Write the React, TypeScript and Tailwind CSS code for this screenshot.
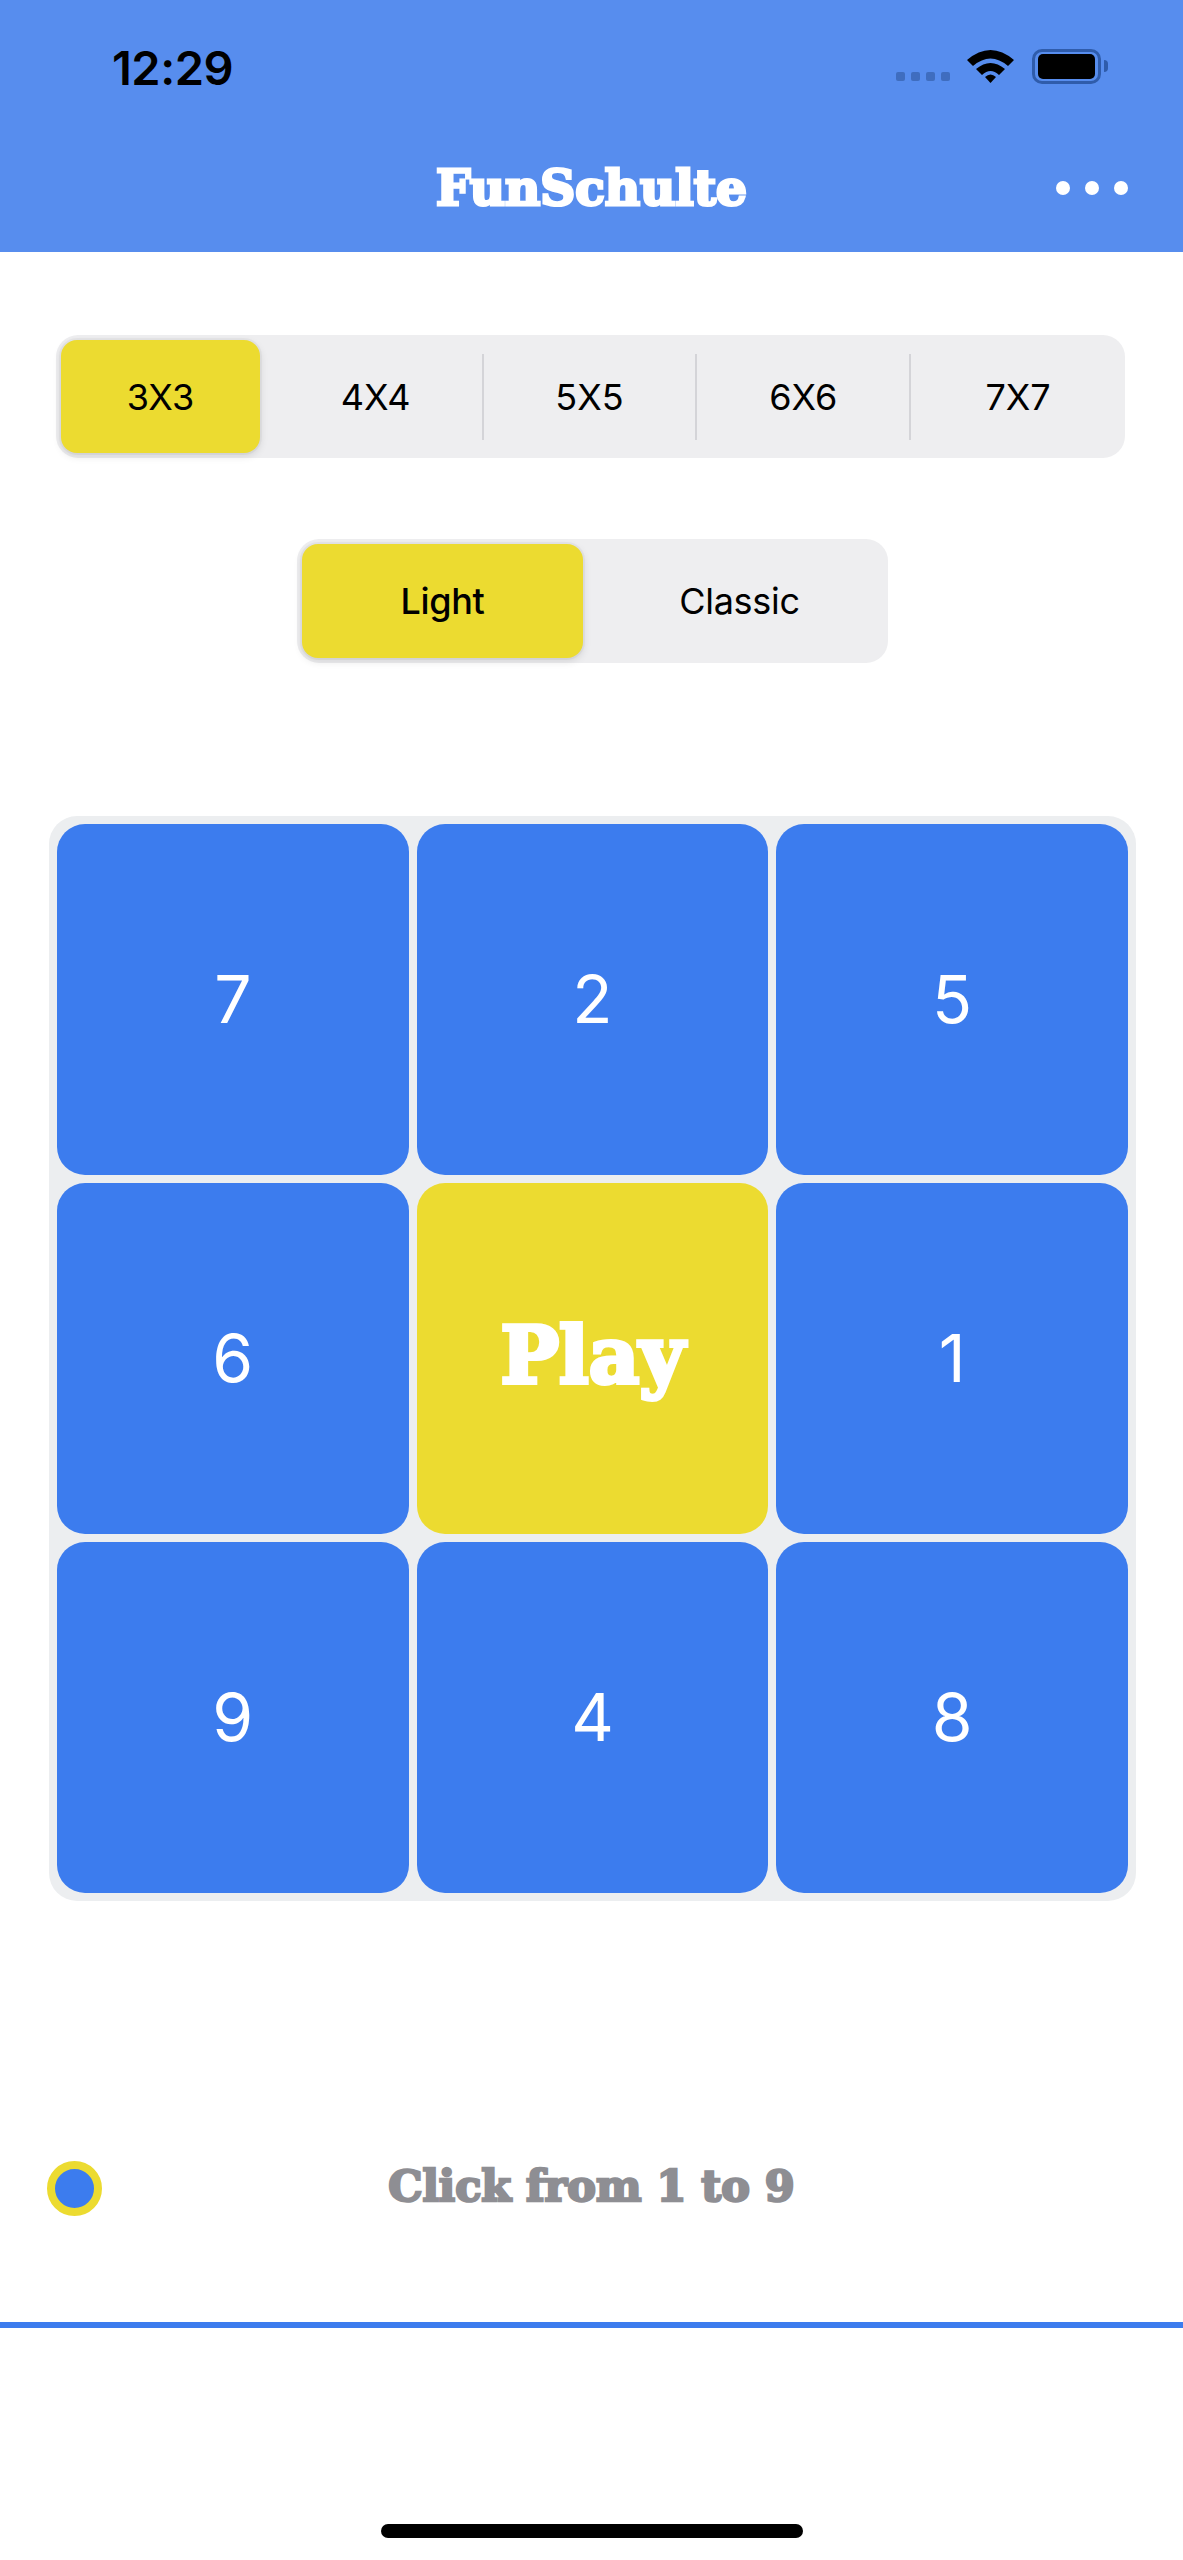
const sizes = ['3X3', '4X4', '5X5', '6X6', '7X7'];
const cells = ['7', '2', '5', '6', 'Play', '1', '9', '4', '8'];

function SizeTabs() {
  return (
    <div className="ml-[56px] mt-[83px] flex h-[123px] w-[1069px] items-center rounded-[22px] bg-[#eeeef0]">
      {sizes.map((size, i) => (
        <div key={size} className="flex h-full flex-1 items-center">
          {i === 0 ? (
            <div className="ml-[5px] flex h-[113px] w-[199px] items-center justify-center rounded-[16px] bg-[#ecdb30] shadow-[0_3px_8px_rgba(0,0,0,0.12),0_0_0_2px_rgba(0,0,0,0.03)]">
              {size}
            </div>
          ) : (
            <div
              className={
                i < 4
                  ? 'flex h-[86px] w-full items-center justify-center border-r-2 border-[#d4d4d8]'
                  : 'flex h-[86px] w-full items-center justify-center'
              }
            >
              {size}
            </div>
          )}
        </div>
      ))}
    </div>
  );
}

function ThemeTabs() {
  return (
    <div className="ml-[297px] mt-[81px] flex h-[124px] w-[591px] items-center rounded-[22px] bg-[#eeeef0]">
      <div className="ml-[5px] flex h-[114px] w-[281px] items-center justify-center rounded-[16px] bg-[#ecdb30] font-medium tracking-[-0.3px] shadow-[0_3px_8px_rgba(0,0,0,0.12),0_0_0_2px_rgba(0,0,0,0.03)]">
        Light
      </div>
      <div className="flex flex-1 items-center justify-center pl-[8px] tracking-[-0.3px]">Classic</div>
    </div>
  );
}

function Board() {
  return (
    <div className="ml-[49px] mt-[153px] grid w-[1087px] grid-cols-3 gap-[8px] rounded-[28px] bg-[#eceef0] p-[8px]">
      {cells.map((cell) =>
        cell === 'Play' ? (
          <div
            key={cell}
            className="flex h-[351px] items-center justify-center rounded-[28px] bg-[#ecdb30] pb-[6px] font-['DejaVu_Serif',serif] text-[78px] font-bold text-white [-webkit-text-stroke:4px_white]"
          >
            {cell}
          </div>
        ) : (
          <div
            key={cell}
            className="flex h-[351px] items-center justify-center rounded-[28px] bg-[#3c7cee] text-[66px] font-normal text-white"
          >
            {cell}
          </div>
        ),
      )}
    </div>
  );
}

export default function App() {
  return (
    <div className="flex h-[2560px] w-full flex-col overflow-hidden bg-white font-['Inter',sans-serif] text-[36px] text-black">
      {/* Header */}
      <div className="h-[252px] bg-[#578dee]">
        <div className="flex h-[148px] items-start justify-between pl-[112px] pr-[75px] pt-[46px]">
          <span className="text-[47px] font-semibold leading-[44px] tracking-[-0.5px]">12:29</span>
          <div className="flex items-start">
            <div className="mr-[17px] mt-[26px] flex gap-[6px]">
              <span className="h-[9px] w-[9px] rounded-[2px] bg-[#3f6dbf]" />
              <span className="h-[9px] w-[9px] rounded-[2px] bg-[#3f6dbf]" />
              <span className="h-[9px] w-[9px] rounded-[2px] bg-[#3f6dbf]" />
              <span className="h-[9px] w-[9px] rounded-[2px] bg-[#3f6dbf]" />
            </div>
            <svg width="47" height="35" viewBox="0 0 47 35" className="mt-[3px]">
              <path d="M0 11 Q23.5 -9 47 11 L41 17 Q23.5 2 6 17 Z" fill="#000" />
              <path d="M9 20 Q23.5 8 38 20 L32 26 Q23.5 18 15 26 Z" fill="#000" />
              <path d="M18 28 Q23.5 23 29 28 L23.5 34 Z" fill="#000" />
            </svg>
            <div className="ml-[18px] mt-[3px] flex h-[35px] w-[69px] items-center justify-center rounded-[10px] border-[3px] border-[#2f5cab]">
              <div className="h-[25px] w-[57px] rounded-[5px] bg-black" />
            </div>
            <div className="ml-[3px] mt-[14px] h-[12px] w-[4px] rounded-r-[4px] bg-[#2f5cab]" />
          </div>
        </div>
        <div className="grid h-[80px] grid-cols-[1fr_auto_1fr] items-center">
          <div />
          <span className="font-['DejaVu_Serif',serif] text-[48.5px] font-bold leading-none text-white [-webkit-text-stroke:3px_white]">
            FunSchulte
          </span>
          <div className="flex justify-end gap-[15px] pr-[55px]">
            <span className="h-[14px] w-[14px] rounded-full bg-white" />
            <span className="h-[14px] w-[14px] rounded-full bg-white" />
            <span className="h-[14px] w-[14px] rounded-full bg-white" />
          </div>
        </div>
      </div>

      <SizeTabs />
      <ThemeTabs />
      <Board />

      {/* Hint row */}
      <div className="mt-[260px] grid h-[55px] grid-cols-[1fr_auto_1fr] items-center">
        <div className="ml-[47px] flex h-[55px] w-[55px] items-center justify-center rounded-full border-[8px] border-[#ecdb30] bg-[#3c7cee]" />
        <span className="pb-[5px] font-['DejaVu_Serif',serif] text-[43px] font-bold leading-none text-[#8e8e93] [-webkit-text-stroke:2.5px_#8e8e93]">
          Click from 1 to 9
        </span>
        <div />
      </div>

      <div className="mt-[106px] h-[6px] w-full bg-[#3c7cee]" />

      <div className="mx-auto mt-[196px] h-[14px] w-[422px] rounded-full bg-black" />
    </div>
  );
}
